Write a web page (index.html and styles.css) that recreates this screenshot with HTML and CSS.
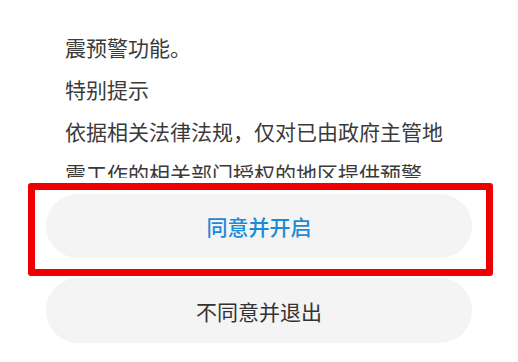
FILE: index.html
```html
<!DOCTYPE html>
<html lang="zh-CN">

<head>
    <meta charset="UTF-8">
    <title>地震预警</title>
    <link rel="stylesheet" href="styles.css">
</head>

<body>
    <main class="screen">
        <section class="notice">
            <p>震预警功能。</p>
            <p>特别提示</p>
            <p>依据相关法律法规，仅对已由政府主管地</p>
            <p>震工作的相关部门授权的地区提供预警</p>
        </section>

        <section class="actions">
            <div class="mark">
                <button class="btn btn-agree">同意并开启</button>
            </div>
            <button class="btn btn-quit">不同意并退出</button>
        </section>
    </main>
</body>

</html>
```

FILE: styles.css
```css
body {
    margin: 0;
    background-color: #fff;
    font-family: "Noto Sans CJK SC", "Noto Sans", sans-serif;
    color: #3a3a3a;
}

.screen {
    width: 518px;
    height: 362px;
    overflow: hidden;
}

.notice {
    height: 178px;
    overflow: hidden;
    padding: 26px 0 0 65px;
    box-sizing: border-box;
}

.notice p {
    margin: 0;
    font-size: 21px;
    line-height: 42px;
    white-space: nowrap;
}

.actions {
    background-color: #fff;
    padding-top: 5px;
}

.mark {
    width: 465px;
    height: 93px;
    margin-left: 28px;
    box-sizing: border-box;
    border: 7px solid #ee0000;
    border-radius: 3px;
    padding: 4px 11px 11px 11px;
}

.btn {
    display: block;
    width: 426px;
    height: 64px;
    border: none;
    border-radius: 32px;
    background-color: #f4f4f4;
    font-family: "Noto Sans CJK SC", "Noto Sans", sans-serif;
    font-size: 21px;
    padding: 0;
}

.btn-agree {
    color: #1d8ad6;
    font-weight: 500;
}

.btn-quit {
    height: 65px;
    margin: 2px 0 0 46px;
    color: #333;
}
```
